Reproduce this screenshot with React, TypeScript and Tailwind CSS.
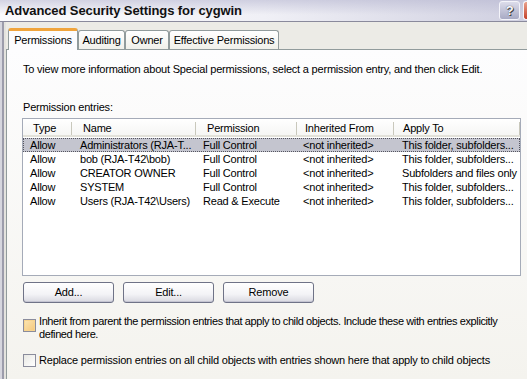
import React from "react";

interface Entry {
  type: string;
  name: string;
  permission: string;
  inherited: string;
  applyTo: string;
}

const entries: Entry[] = [
  { type: "Allow", name: "Administrators (RJA-T...", permission: "Full Control", inherited: "<not inherited>", applyTo: "This folder, subfolders..." },
  { type: "Allow", name: "bob (RJA-T42\\bob)", permission: "Full Control", inherited: "<not inherited>", applyTo: "This folder, subfolders..." },
  { type: "Allow", name: "CREATOR OWNER", permission: "Full Control", inherited: "<not inherited>", applyTo: "Subfolders and files only" },
  { type: "Allow", name: "SYSTEM", permission: "Full Control", inherited: "<not inherited>", applyTo: "This folder, subfolders..." },
  { type: "Allow", name: "Users (RJA-T42\\Users)", permission: "Read & Execute", inherited: "<not inherited>", applyTo: "This folder, subfolders..." },
];

// widths of the list columns (divider included)
const columns = [
  { label: "Type", w: "w-[49px]", hp: "pl-[10px]", rp: "pl-[7px]" },
  { label: "Name", w: "w-[124px]", hp: "pl-[11px]", rp: "pl-[8px]" },
  { label: "Permission", w: "w-[101px]", hp: "pl-[11px]", rp: "pl-[7px]" },
  { label: "Inherited From", w: "w-[97px]", hp: "pl-[8px]", rp: "pl-[6px]" },
  { label: "Apply To", w: "w-[126px]", hp: "pl-[9px]", rp: "pl-[8px]" },
];

const tabs = [
  { label: "Permissions", w: "w-[70px]", active: true },
  { label: "Auditing", w: "w-[47px]", active: false },
  { label: "Owner", w: "w-[44px]", active: false },
  { label: "Effective Permissions", w: "w-[110px]", active: false },
];

const XpButton: React.FC<{ label: string }> = ({ label }) => (
  <button className="w-[91px] h-[21px] rounded-[3px] border border-[#6f7387] bg-[linear-gradient(to_bottom,#ffffff,#f3f3f6_60%,#d8d8e0)] text-[11px] leading-[13px] text-black shadow-[inset_0_-1px_0_#c5c5d2]">
    {label}
  </button>
);

export default function App() {
  const cells = (e: Entry) => [e.type, e.name, e.permission, e.inherited, e.applyTo];

  return (
    <div className="w-[527px] h-[379px] overflow-hidden flex flex-col bg-[#ecebe6] font-['Liberation_Sans',Arial,sans-serif] text-[11px] leading-[13px] tracking-[-0.2px] text-black">
      {/* Title bar */}
      <div className="h-[22px] shrink-0 flex items-center justify-between pl-[5px] border-b border-[#8a8a9c] bg-[linear-gradient(to_bottom,rgba(185,185,210,0.6),rgba(255,255,255,0)_70%),linear-gradient(to_right,#fbfbfd,#f0f0f6_50%,#cfcfe0)]">
        <span className="text-[13px] font-bold tracking-[-0.1px] text-[#111]">
          Advanced Security Settings for cygwin
        </span>
        <div className="flex items-center gap-[3px] mr-[-4px]">
          <div className="w-[21px] h-[19px] rounded-[3px] border border-[#f4f4fa] bg-[linear-gradient(to_bottom,#dcdcea,#a8aac4)] flex items-center justify-center text-[13px] font-bold text-[#f8f8ff] [text-shadow:0_0_1px_#333,1px_1px_0_#444]">
            ?
          </div>
          <div className="w-[8px] h-[19px] rounded-l-[3px] border border-r-0 border-[#f4f4fa] bg-[linear-gradient(to_bottom,#e9a28e,#c4422a)]" />
        </div>
      </div>

      <div className="flex flex-1 min-h-0">
        {/* left window frame */}
        <div className="w-[6px] shrink-0 flex">
          <div className="w-[2px] bg-[#d6d6de]" />
          <div className="w-[2px] bg-[#9c9cab]" />
          <div className="w-[2px] bg-[#e4e3de]" />
        </div>

        <div className="flex-1 flex flex-col pt-[6px]">
          {/* Tabs */}
          <div className="flex items-end h-[22px] pl-[2px] -mb-px relative z-10">
            {tabs.map((t) =>
              t.active ? (
                <div
                  key={t.label}
                  className={`${t.w} h-[22px] flex items-center justify-center rounded-t-[3px] border-x border-[#919b9c] border-t-[3px] border-t-[#f0a43c] bg-[#fcfcfe] pb-[1px]`}
                >
                  {t.label}
                </div>
              ) : (
                <div
                  key={t.label}
                  className={`${t.w} h-[19px] flex items-center justify-center rounded-t-[3px] border border-[#919b9c] border-b-0 bg-[linear-gradient(to_bottom,#ffffff,#f0f0ea)] mb-px`}
                >
                  {t.label}
                </div>
              )
            )}
          </div>

          {/* Tab page */}
          <div className="flex-1 -mr-[20px] border-l border-t border-[#919b9c] bg-[linear-gradient(to_bottom,#fdfdfe,#f4f3ee)] pl-[15px] flex flex-col">
            <p className="mt-[13px] pl-[1px]">
              To view more information about Special permissions, select a permission entry, and then click Edit.
            </p>
            <p className="mt-[25px] pl-[1px]">Permission entries:</p>

            {/* List */}
            <div className="mt-[4px] w-[499px] h-[158px] border border-[#a5abb8] bg-white flex flex-col">
              <div className="h-[18px] flex bg-[linear-gradient(to_bottom,#ffffff,#f6f6f4)] border-b-[2px] border-[#e3e2da]">
                {columns.map((c) => (
                  <div key={c.label} className={`${c.w} flex items-center justify-between pt-[2px] ${c.hp}`}>
                    <span>{c.label}</span>
                    <span className="w-px h-[13px] bg-[#c9c8bc]" />
                  </div>
                ))}
              </div>
              <div className="pt-px">
                {entries.map((e, i) => (
                  <div
                    key={e.name}
                    className={`h-[14px] flex ${
                      i === 0 ? "bg-[#c4c5cf] outline-1 outline-dotted outline-[#55555f] -outline-offset-1" : ""
                    }`}
                  >
                    {cells(e).map((v, j) => (
                      <div key={j} className={`${columns[j].w} ${columns[j].rp} whitespace-nowrap overflow-hidden flex items-center`}>
                        {v}
                      </div>
                    ))}
                  </div>
                ))}
              </div>
            </div>

            {/* Buttons */}
            <div className="mt-[6px] ml-px flex gap-[9px]">
              <XpButton label="Add..." />
              <XpButton label="Edit..." />
              <XpButton label="Remove" />
            </div>

            {/* Checkboxes */}
            <div className="mt-[12px] ml-px flex gap-[3px]">
              <span className="mt-[4px] w-[13px] h-[13px] shrink-0 border border-[#8a8c9c] bg-[linear-gradient(135deg,#fbe6b4,#f5c77a)] shadow-[inset_0_0_0_1px_#f8d48e]" />
              <p className="w-[482px] tracking-[-0.4px]">
                Inherit from parent the permission entries that apply to child objects. Include these with entries explicitly defined here.
              </p>
            </div>
            <div className="mt-[13px] ml-px flex items-center gap-[3px]">
              <span className="w-[13px] h-[13px] shrink-0 border border-[#8a8c9c] bg-[linear-gradient(135deg,#e8e8e4,#ffffff)]" />
              <p>Replace permission entries on all child objects with entries shown here that apply to child objects</p>
            </div>
          </div>
        </div>
      </div>
    </div>
  );
}
